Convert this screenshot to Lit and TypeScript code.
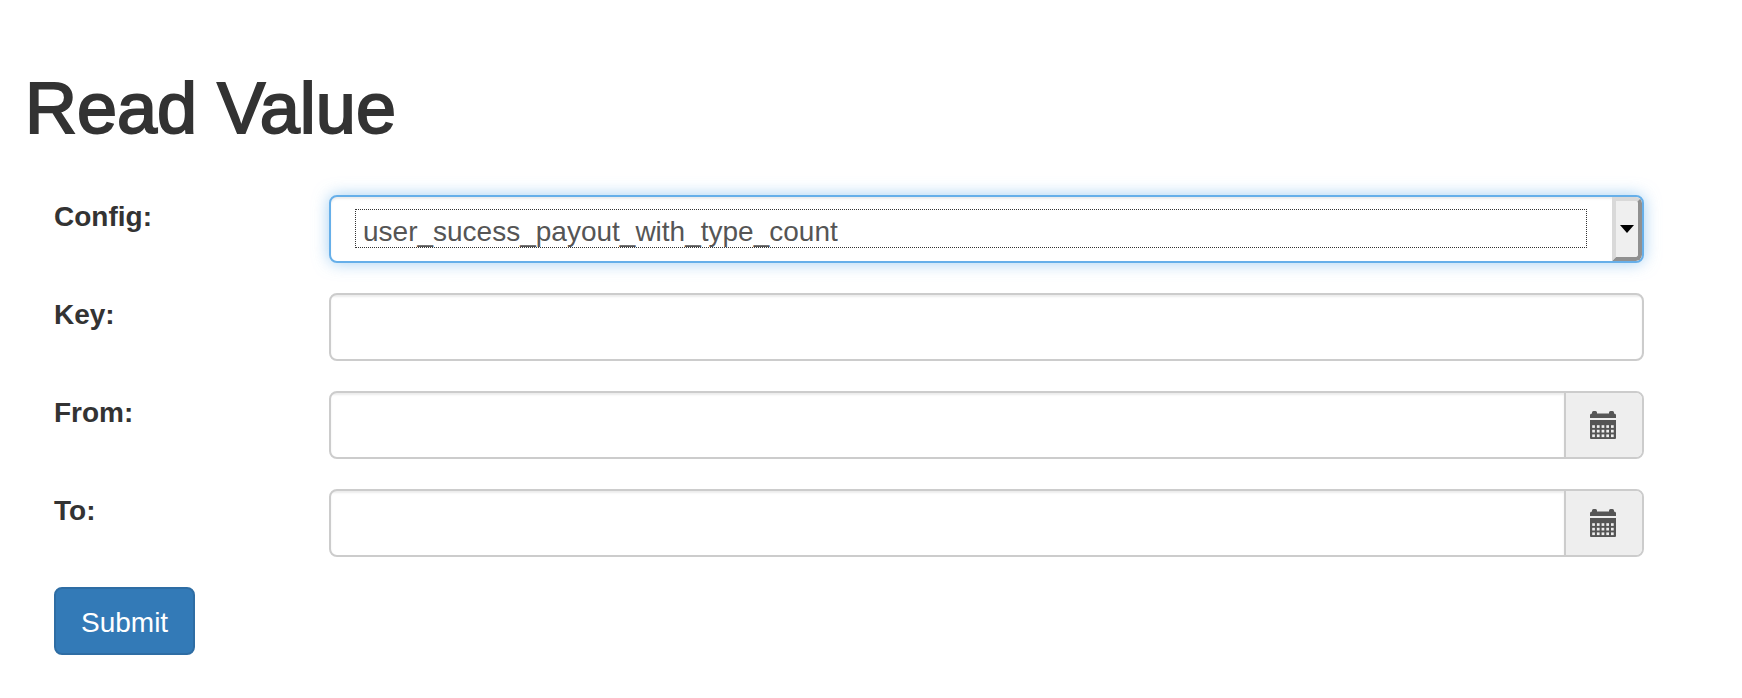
import { LitElement, html, css, svg } from "lit";
import { customElement } from "lit/decorators.js";

const dots = [0, 1, 2].flatMap((row) =>
  [0, 1, 2, 3, 4].map(
    (col) => svg`<rect x=${2.2 + col * 4.7} y=${14.2 + row * 4.6} width="2.7" height="2.7" fill="#eee" />`
  )
);

@customElement("app-root")
export class AppRoot extends LitElement {
  static styles = css`
    :host {
      display: block;
      box-sizing: border-box;
      padding: 69px 68px 40px 24px;
      background: #fff;
      color: #333;
      font: 28px/40px "Liberation Sans", Arial, sans-serif;
    }
    * {
      box-sizing: border-box;
    }
    h1 {
      margin: 0 0 47px;
      padding-left: 1px;
      font-size: 72px;
      line-height: 79px;
      font-weight: 400;
      -webkit-text-stroke: 2px #333;
    }
    .form {
      display: grid;
      gap: 30px;
    }
    .row {
      display: grid;
      grid-template-columns: minmax(0, 1fr) minmax(0, 5fr);
    }
    .label,
    .cell {
      padding: 0 30px;
    }
    .label {
      padding-top: 2px;
      font-weight: 700;
    }
    .field {
      display: flex;
      height: 68px;
      border: 2px solid #ccc;
      border-radius: 8px;
      background: #fff;
      overflow: hidden;
    }
    .input {
      flex: 1;
      min-width: 0;
      padding: 12px 24px;
      border: 0;
      outline: 0;
      background: transparent;
      box-shadow: inset 0 2px 2px rgba(0, 0, 0, 0.075);
      font: inherit;
      color: #555;
    }
    .focused {
      border-color: #66afe9;
      box-shadow: inset 0 2px 2px rgba(0, 0, 0, 0.075), 0 0 16px rgba(102, 175, 233, 0.6);
    }
    .select {
      flex: 1;
      min-width: 0;
      margin: 12px 25px 13px 24px;
      padding: 2px 7px 0;
      border: 1px dotted #333;
      outline: 0;
      appearance: none;
      background: transparent;
      color: #555;
      font: inherit;
    }
    .arrow {
      display: grid;
      place-items: center;
      width: 30px;
      border: 4px solid;
      border-color: #d9d9d9 #909090 #909090 #d9d9d9;
      border-radius: 0 6px 6px 0;
      background: #efefef;
    }
    .addon {
      display: grid;
      place-items: center;
      width: 78px;
      padding: 0 2px 0 0;
      border: 0;
      border-left: 2px solid #ccc;
      background: #eee;
    }
    .submit {
      justify-self: start;
      height: 68px;
      margin-left: 30px;
      padding: 3px 25px 0;
      border: 2px solid #2e6da4;
      border-radius: 8px;
      background: #337ab7;
      color: #fff;
      font: inherit;
    }
    svg {
      display: block;
    }
  `;

  private dateRow(id: string, label: string) {
    return html`
      <div class="row">
        <label class="label" for=${id}>${label}</label>
        <div class="cell">
          <div class="field">
            <input class="input" id=${id} type="text" />
            <button class="addon" type="button" aria-label="Pick a date">
              <svg width="26" height="28" viewBox="0 0 26 28">
                <path fill="#555" d="M0 7V4q0-1.5 2-1.5V1.5Q2 0 3.500 0h2Q7 0 7 1.500v1h12v-1Q19 0 20.500 0h2Q24 0 24 1.500v1q2 0 2 1.500v3zM0 9h26v18q0 1-1 1H1q-1 0-1-1z" />
                ${dots}
              </svg>
            </button>
          </div>
        </div>
      </div>
    `;
  }

  render() {
    return html`
      <h1>Read Value</h1>
      <form class="form">
        <div class="row">
          <label class="label" for="config">Config:</label>
          <div class="cell">
            <div class="field focused">
              <select class="select" id="config">
                <option>user_sucess_payout_with_type_count</option>
              </select>
              <span class="arrow" aria-hidden="true">
                <svg width="14" height="8" viewBox="0 0 14 8"><path d="M0 0h14L7 8z" /></svg>
              </span>
            </div>
          </div>
        </div>
        <div class="row">
          <label class="label" for="key">Key:</label>
          <div class="cell">
            <div class="field"><input class="input" id="key" type="text" /></div>
          </div>
        </div>
        ${this.dateRow("from", "From:")} ${this.dateRow("to", "To:")}
        <button class="submit" type="button">Submit</button>
      </form>
    `;
  }
}
